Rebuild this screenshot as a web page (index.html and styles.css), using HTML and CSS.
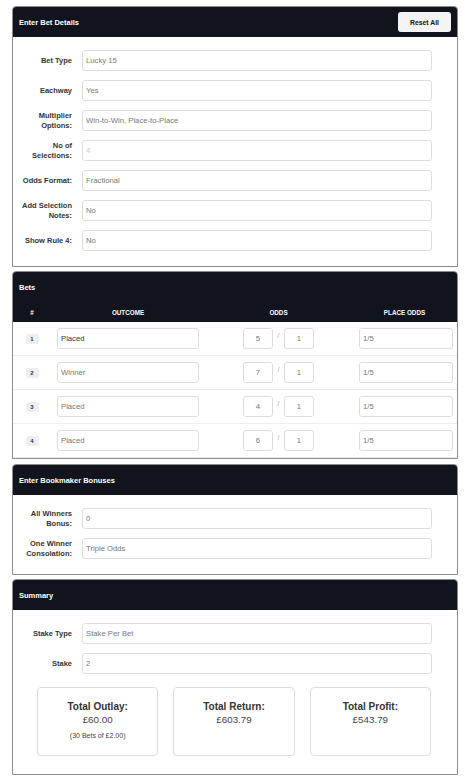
FILE: index.html
```html
<!DOCTYPE html>
<html lang="en">
<head>
  <meta charset="UTF-8" />
  <meta name="viewport" content="width=device-width, initial-scale=1" />
  <title>Lucky 15 Bet Calculator</title>
  <link rel="stylesheet" href="styles.css">
</head>
<body>
  <div class="page">

    <!-- Bet Details -->
    <div class="card">
      <div class="card-header">
        <span class="card-title">Enter Bet Details</span>
        <button class="reset-btn">Reset All</button>
      </div>
      <div class="card-body">
        <div class="form-row">
          <label>Bet Type</label>
          <input class="field" value="Lucky 15" readonly />
        </div>
        <div class="form-row">
          <label>Eachway</label>
          <input class="field" value="Yes" readonly />
        </div>
        <div class="form-row">
          <label>Multiplier<br>Options:</label>
          <input class="field" value="Win-to-Win, Place-to-Place" readonly />
        </div>
        <div class="form-row">
          <label>No of<br>Selections:</label>
          <input class="field disabled" value="4" disabled />
        </div>
        <div class="form-row">
          <label>Odds Format:</label>
          <input class="field" value="Fractional" readonly />
        </div>
        <div class="form-row">
          <label>Add Selection<br>Notes:</label>
          <input class="field" value="No" readonly />
        </div>
        <div class="form-row">
          <label>Show Rule 4:</label>
          <input class="field" value="No" readonly />
        </div>
      </div>
    </div>

    <!-- Bets -->
    <div class="card bets-card">
      <div class="card-header tall">
        <div class="card-title-row"><span class="card-title">Bets</span></div>
        <div class="bet-grid bet-head">
          <span>#</span>
          <span>Outcome</span>
          <span>Odds</span>
          <span>Place Odds</span>
        </div>
      </div>
      <div id="betRows"></div>
    </div>

    <!-- Bonuses -->
    <div class="card">
      <div class="card-header">
        <span class="card-title">Enter Bookmaker Bonuses</span>
      </div>
      <div class="card-body">
        <div class="form-row">
          <label>All Winners<br>Bonus:</label>
          <input class="field" value="0" readonly />
        </div>
        <div class="form-row">
          <label>One Winner<br>Consolation:</label>
          <input class="field" value="Triple Odds" readonly />
        </div>
      </div>
    </div>

    <!-- Summary -->
    <div class="card">
      <div class="card-header">
        <span class="card-title">Summary</span>
      </div>
      <div class="card-body">
        <div class="form-row">
          <label>Stake Type</label>
          <input class="field" value="Stake Per Bet" readonly />
        </div>
        <div class="form-row">
          <label>Stake</label>
          <input class="field" value="2" readonly />
        </div>
        <div class="totals">
          <div class="total-box">
            <div class="total-label">Total Outlay:</div>
            <div class="total-value">£60.00</div>
            <div class="total-note">(30 Bets of £2.00)</div>
          </div>
          <div class="total-box">
            <div class="total-label">Total Return:</div>
            <div class="total-value">£603.79</div>
          </div>
          <div class="total-box">
            <div class="total-label">Total Profit:</div>
            <div class="total-value">£543.79</div>
          </div>
        </div>
      </div>
    </div>

  </div>

  <script>
    const bets = [
      { outcome: 'Placed', num: 5, den: 1, place: '1/5' },
      { outcome: 'Winner', num: 7, den: 1, place: '1/5' },
      { outcome: 'Placed', num: 4, den: 1, place: '1/5' },
      { outcome: 'Placed', num: 6, den: 1, place: '1/5' }
    ];

    function renderBets() {
      const rows = document.getElementById('betRows');
      rows.innerHTML = '';
      bets.forEach((bet, i) => {
        const row = document.createElement('div');
        row.className = 'bet-grid bet-row';
        row.innerHTML =
          '<span class="bet-num">' + (i + 1) + '</span>' +
          '<input class="field outcome' + (i === 0 ? ' active' : '') + '" value="' + bet.outcome + '" readonly />' +
          '<div class="odds">' +
            '<input class="field odd" value="' + bet.num + '" readonly />' +
            '<span class="slash">/</span>' +
            '<input class="field odd" value="' + bet.den + '" readonly />' +
          '</div>' +
          '<input class="field place" value="' + bet.place + '" readonly />';
        rows.appendChild(row);
      });
    }

    renderBets();
  </script>
</body>
</html>
```

FILE: styles.css
```css
body {
  margin: 0;
  padding: 6px 0 0 12px;
  font-family: 'Liberation Sans', Arial, sans-serif;
  background: #fff;
  color: #333;
}
.page {
  width: 446px;
}
.card {
  border: 1px solid #8c8c8c;
  border-radius: 4px 4px 0 0;
  overflow: hidden;
  margin-bottom: 4px;
  background: #fff;
}
.bets-card {
  margin-bottom: 5px;
}
.card-header {
  display: flex;
  align-items: center;
  justify-content: space-between;
  height: 30px;
  padding: 0 6px 0 6px;
  background: #11141d;
  color: #fff;
}
.card-header.tall {
  display: block;
  height: auto;
  padding: 0;
}
.card-title-row {
  display: flex;
  align-items: center;
  height: 30px;
  padding: 0 6px;
}
.card-title {
  font-size: 7.5px;
  font-weight: bold;
}
.reset-btn {
  width: 53px;
  height: 20px;
  padding: 0;
  font-family: inherit;
  font-size: 6.8px;
  font-weight: bold;
  color: #111;
  background: #f4f4f4;
  border: none;
  border-radius: 3px;
}
.card-body {
  padding: 13px 25px 15px 0;
  display: flex;
  flex-direction: column;
  gap: 9px;
}
.form-row {
  display: flex;
  align-items: center;
  gap: 10px;
}
.form-row label {
  flex: 0 0 59px;
  text-align: right;
  font-size: 7.5px;
  font-weight: bold;
  line-height: 10px;
  color: #333;
}
.field {
  box-sizing: border-box;
  height: 21px;
  padding: 0 3px;
  font-family: inherit;
  font-size: 7.7px;
  color: #777;
  background: #fff;
  border: 1px solid #ddd;
  border-radius: 3px;
  outline: none;
}
.form-row .field {
  flex: 1;
  min-width: 0;
}
.field.disabled {
  color: #ccc;
}

/* bets table */
.bet-grid {
  display: grid;
  grid-template-columns: 38px 154px 147px 1fr;
  align-items: center;
}
.bet-head {
  height: 20px;
  font-size: 6.3px;
  font-weight: bold;
  text-transform: uppercase;
  text-align: center;
}
.bet-row {
  padding: 6px 0;
  border-bottom: 1px solid #eee;
}
.bet-num {
  justify-self: center;
  width: 13px;
  height: 10px;
  line-height: 10px;
  text-align: center;
  font-size: 6px;
  font-weight: bold;
  color: #333;
  background: #eee;
  border-radius: 2px;
}
.outcome {
  justify-self: center;
  width: 142px;
}
.outcome.active {
  color: #333;
}
.odds {
  display: flex;
  justify-content: center;
  align-items: center;
  gap: 3px;
}
.odd {
  width: 30px;
  text-align: center;
}
.slash {
  width: 5px;
  text-align: center;
  font-size: 7px;
  color: #aaa;
  margin-top: -6px;
}
.place {
  justify-self: end;
  width: 94px;
  margin-right: 4px;
}

/* summary */
.totals {
  display: grid;
  grid-template-columns: repeat(3, 1fr);
  gap: 15px;
  margin: 4px 1px 3px 24px;
}
.total-box {
  padding: 12px 6px 14px;
  text-align: center;
  border: 1px solid #ddd;
  border-radius: 4px;
}
.total-label {
  font-size: 10px;
  font-weight: bold;
  line-height: 13px;
  color: #333;
}
.total-value {
  font-size: 9.8px;
  line-height: 14px;
  color: #444;
}
.total-note {
  margin-top: 4px;
  font-size: 7px;
  line-height: 10px;
  color: #444;
}
```
